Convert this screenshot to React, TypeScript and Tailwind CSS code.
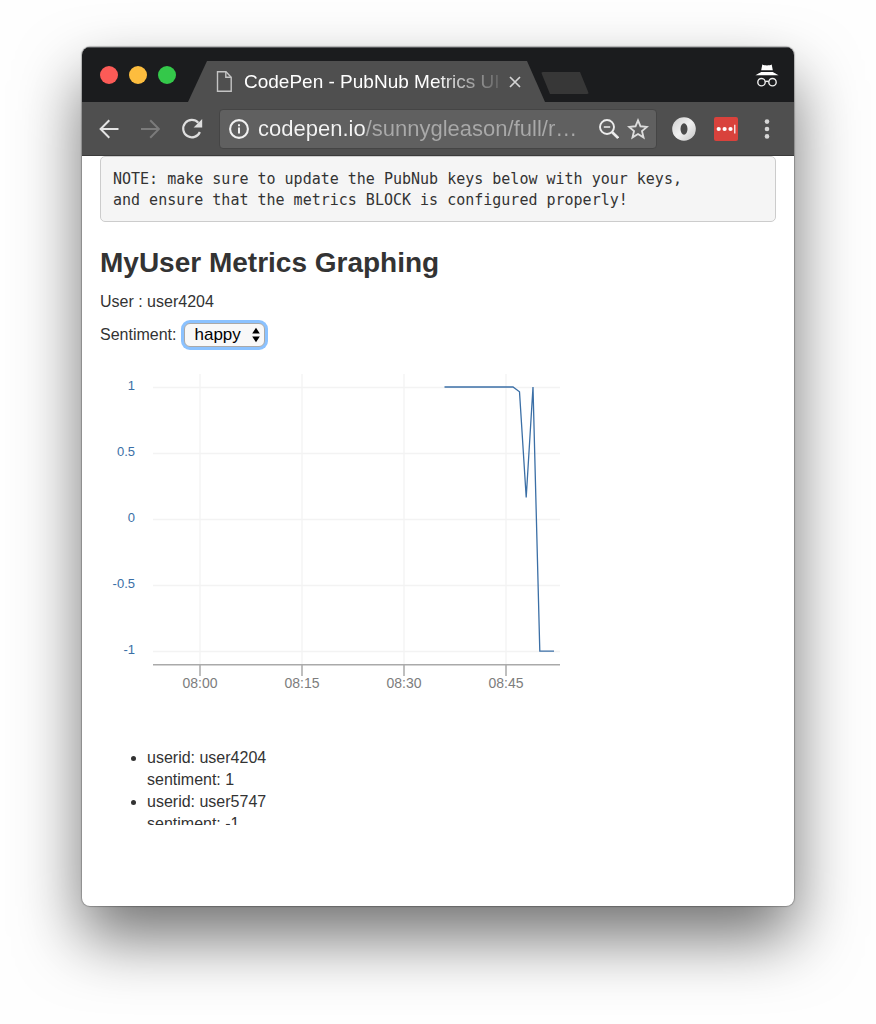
import { useState } from "react";

const yTicks = [
  { label: "1", y: 18 },
  { label: "0.5", y: 84 },
  { label: "0", y: 150 },
  { label: "-0.5", y: 216 },
  { label: "-1", y: 282 },
];

const xTicks = [
  { label: "08:00", x: 100 },
  { label: "08:15", x: 202 },
  { label: "08:30", x: 304 },
  { label: "08:45", x: 406 },
];

const events = [
  { userid: "user4204", sentiment: 1 },
  { userid: "user5747", sentiment: -1 },
];

function TitleBar() {
  return (
    <div className="flex h-[55px] items-center border-t border-[#55575a] bg-[#1b1c1e] pl-[18px] pr-[15px]">
      <div className="flex shrink-0 gap-[11px]">
        <button aria-label="Close window" className="size-[18px] rounded-full bg-[#fc5b57]" />
        <button aria-label="Minimize window" className="size-[18px] rounded-full bg-[#fdbd3e]" />
        <button aria-label="Zoom window" className="size-[18px] rounded-full bg-[#34c84a]" />
      </div>
      <div className="ml-3 flex h-[41px] w-[357px] min-w-0 items-center self-end bg-[#4f4f4f] pl-7 pr-6 [clip-path:polygon(19px_0,calc(100%_-_18px)_0,100%_100%,0_100%)]">
        <svg className="h-[21px] w-4 shrink-0" viewBox="0 0 16 21" fill="none" stroke="#c4c4c4" strokeWidth="1.4">
          <path d="M1.500.8H10l5.200 5.400v14H1.500z" />
          <path d="M9.800.8v5.400h5.400" />
        </svg>
        <span className="ml-3 min-w-0 flex-1 overflow-hidden whitespace-nowrap text-[19px] leading-6 text-white mask-[linear-gradient(90deg,#000_190px,transparent_264px)]">
          CodePen - PubNub Metrics UI
        </span>
        <button aria-label="Close tab" className="ml-2 shrink-0">
          <svg className="size-3" viewBox="0 0 12 12" stroke="#d4d4d4" strokeWidth="1.700">
            <path d="M1 1l10 10M11 1L1 11" />
          </svg>
        </button>
      </div>
      <button
        aria-label="New tab"
        className="-ml-1 mt-4 h-[22px] w-12 shrink-0 rounded-[2px] bg-[#373737] [clip-path:polygon(0_0,39px_0,100%_100%,9px_100%)]"
      />
      <svg className="ml-auto h-[23px] w-6 shrink-0" viewBox="0 0 24 23" fill="none">
        <path d="M7.300.6c1.500.7 2.600.9 4.700.9s3.200-.2 4.700-.9l1.100 5.600H6.200z" fill="#fff" />
        <path d="M.4 11.300c1.800-1.300 4.400-2.300 5.800-3.300h11.600c1.400 1 4 2 5.800 3.300z" fill="#fff" />
        <circle cx="6.500" cy="18.200" r="3.700" stroke="#eee" strokeWidth="1.400" />
        <circle cx="17.500" cy="18.200" r="3.700" stroke="#eee" strokeWidth="1.400" />
        <path d="M10.200 17.700c1.200-.6 2.400-.6 3.600 0" stroke="#eee" strokeWidth="1.400" />
      </svg>
    </div>
  );
}

function Toolbar() {
  return (
    <div className="flex h-[54px] items-center border-b border-[#3a3a3a] bg-[#4f4f4f] px-[17px]">
      <div className="flex shrink-0 gap-[21px]">
        <button aria-label="Back">
          <svg className="size-5" viewBox="0 0 20 20" fill="none" stroke="#e4e4e4" strokeWidth="2">
            <path d="M19.500 10H2M10.300 1.300L1.600 10l8.700 8.700" />
          </svg>
        </button>
        <button aria-label="Forward">
          <svg className="size-5" viewBox="0 0 20 20" fill="none" stroke="#7b7b7b" strokeWidth="2">
            <path d="M1 10H18.500M10.200 1.300l8.700 8.700-8.700 8.700" />
          </svg>
        </button>
        <button aria-label="Reload">
          <svg className="size-[22px]" viewBox="0 0 22 22" fill="none">
            <path d="M17.300 4.700A8.700 8.700 0 1 0 18.900 14" stroke="#dedede" strokeWidth="2.200" />
            <path d="M21.200 1v8.600h-8.600z" fill="#dedede" />
          </svg>
        </button>
      </div>
      <div className="ml-4 flex h-10 min-w-0 flex-1 items-center rounded-[4px] border border-[#454545] bg-[#606060] pl-[9px] pr-[7px]">
        <svg className="size-5 shrink-0" viewBox="0 0 20 20" fill="none">
          <circle cx="10" cy="10" r="8.900" stroke="#f1f1f1" strokeWidth="2.100" />
          <path d="M9 8.600h2v6H9zM9 5.200h2v2H9z" fill="#f1f1f1" />
        </svg>
        <input
          aria-label="Address"
          readOnly
          value="codepen.io/sunnygleason/full/r…"
          className="ml-[9px] min-w-0 flex-1 bg-[linear-gradient(90deg,#f4f4f4_108px,#a9a9a9_108px)] bg-clip-text text-[22px] leading-7 text-transparent outline-none"
        />
        <button aria-label="Zoom level" className="ml-1 shrink-0">
          <svg className="size-5" viewBox="0 0 20 20" fill="none" stroke="#ececec">
            <circle cx="8" cy="8" r="7" strokeWidth="1.900" />
            <path d="M4.800 8h6.400" strokeWidth="1.600" />
            <path d="M13 13l6.200 6" strokeWidth="2.700" />
          </svg>
        </button>
        <button aria-label="Bookmark this page" className="ml-2 shrink-0">
          <svg className="size-[22px]" viewBox="0 0 22 22" fill="none" stroke="#dcdcdc" strokeWidth="1.900">
            <path d="M11 2.400l2.500 5.900 6.400.6-4.900 4.200 1.500 6.300-5.500-3.400-5.500 3.400L7 13.100 2.100 8.900l6.400-.6z" />
          </svg>
        </button>
      </div>
      <button aria-label="Extension" className="ml-[15px] shrink-0">
        <svg className="size-6" viewBox="0 0 24 24">
          <defs>
            <linearGradient id="ring" x1="0" y1="0" x2="1" y2="1">
              <stop offset="0" stopColor="#cfcfcf" />
              <stop offset=".5" stopColor="#f0f0f0" />
              <stop offset="1" stopColor="#c4c4c4" />
            </linearGradient>
          </defs>
          <circle cx="12" cy="12" r="11.800" fill="url(#ring)" />
          <ellipse cx="12" cy="12" rx="3.500" ry="5.800" fill="#4a4a4a" />
        </svg>
      </button>
      <button aria-label="Password manager" className="ml-[18px] shrink-0">
        <svg className="size-6" viewBox="0 0 24 24" fill="#fff">
          <rect width="24" height="24" rx="2" fill="#d9423c" />
          <circle cx="4.700" cy="12" r="2.100" />
          <circle cx="10.600" cy="12" r="2.100" />
          <circle cx="16.500" cy="12" r="2.100" />
          <path d="M20.200 7.800h1.200v8.600h-1.200z" />
        </svg>
      </button>
      <button aria-label="Menu" className="ml-[19px] shrink-0">
        <svg className="size-5" viewBox="0 0 20 20" fill="#d6d6d6">
          <circle cx="10" cy="2.600" r="2.300" />
          <circle cx="10" cy="10" r="2.300" />
          <circle cx="10" cy="17.400" r="2.300" />
        </svg>
      </button>
    </div>
  );
}

function Chart() {
  return (
    <svg className="mt-5 block h-[330px] w-[476px] max-w-full" viewBox="0 0 476 330" role="img" aria-label="Sentiment over time">
      <g stroke="#f3f3f3" strokeWidth="1.300">
        {yTicks.map((t) => (
          <line key={t.label} x1="53" x2="460" y1={t.y + 0.5} y2={t.y + 0.5} />
        ))}
        {xTicks.map((t) => (
          <line key={t.label} x1={t.x} x2={t.x} y1="5" y2="295" />
        ))}
      </g>
      <g stroke="#aaa" strokeWidth="1.500">
        <line x1="53" x2="460" y1="295.800" y2="295.800" />
        {xTicks.map((t) => (
          <line key={t.label} x1={t.x} x2={t.x} y1="296" y2="307" />
        ))}
      </g>
      <g fill="#3b6fa6" fontSize="13" textAnchor="end">
        {yTicks.map((t) => (
          <text key={t.label} x="35" y={t.y + 3}>
            {t.label}
          </text>
        ))}
      </g>
      <g fill="#7d7d7d" fontSize="14" textAnchor="middle">
        {xTicks.map((t) => (
          <text key={t.label} x={t.x} y="319">
            {t.label}
          </text>
        ))}
      </g>
      <polyline
        points="344.500,18 413,18 419.500,22.800 426.200,128.500 433,18 439.800,282.200 454,282.200"
        fill="none"
        stroke="#3b6fa6"
        strokeWidth="1.300"
      />
    </svg>
  );
}

export default function App() {
  const [sentiment, setSentiment] = useState("happy");

  return (
    <div className="min-h-screen bg-[#fefefe] px-[82px] pb-[118px] pt-[47px] font-['Liberation_Sans',Arial,sans-serif]">
      <div className="overflow-hidden rounded-[8px] bg-white shadow-[0_0_1px_1px_rgba(0,0,0,0.25),0_32px_64px_rgba(0,0,0,0.55)]">
        <TitleBar />
        <Toolbar />
        <main className="px-[18px] pb-[81px] text-base leading-[22px] text-[#333]">
          <pre className="overflow-hidden rounded-[5px] border border-[#ccc] bg-[#f5f5f5] px-3 pb-2.5 pt-3 font-['DejaVu_Sans_Mono',monospace] text-[15px] leading-[21px]">
            {"NOTE: make sure to update the PubNub keys below with your keys,\nand ensure that the metrics BLOCK is configured properly!"}
          </pre>
          <h2 className="mt-[25px] text-[28px] font-bold leading-8">MyUser Metrics Graphing</h2>
          <p className="mt-3">User : user4204</p>
          <div className="mt-2 flex h-7 items-center">
            <label htmlFor="sentiment">Sentiment:</label>
            <div className="relative ml-2">
              <select
                id="sentiment"
                value={sentiment}
                onChange={(e) => setSentiment(e.target.value)}
                className="h-6 w-[81px] appearance-none rounded-[6px] border border-[#a9a9a9] bg-[#f8f8f8] pl-[9px] text-[17px] leading-[22px] text-black outline-none ring-3 ring-[#8bc2ff]"
              >
                <option value="happy">happy</option>
                <option value="sad">sad</option>
              </select>
              <svg className="pointer-events-none absolute right-[5px] top-1 h-4 w-2" viewBox="0 0 8 16">
                <path d="M4 .8l3.800 5.700H.2zM4 15.200l3.800-5.700H.2z" />
              </svg>
            </div>
          </div>
          <Chart />
          <ul className="mt-12 h-[78px] list-disc overflow-hidden pl-[47px]">
            {events.map((e) => (
              <li key={e.userid}>
                userid: {e.userid}
                <br />
                sentiment: {e.sentiment}
              </li>
            ))}
          </ul>
        </main>
      </div>
    </div>
  );
}
